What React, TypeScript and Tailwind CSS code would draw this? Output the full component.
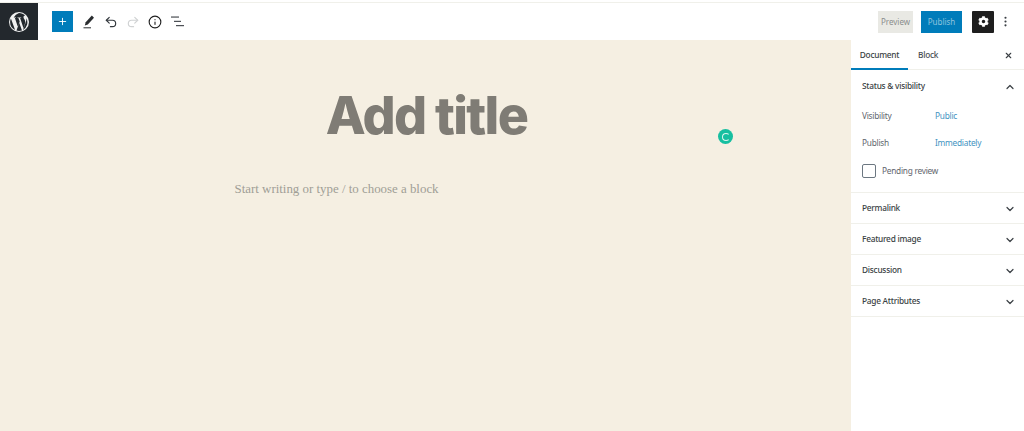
import { ChevronDown, ChevronUp, Info, MoreVertical, Plus, Redo2, Undo2, X } from "lucide-react"
import { FaCog } from "react-icons/fa"

const collapsed = ["Permalink", "Featured image", "Discussion", "Page Attributes"]

function WpLogo() {
  return (
    <svg viewBox="0 0 20 20" className="h-[20px] w-[20px]" fill="#f1f1f1" aria-hidden="true">
      <path d="M10 0a10 10 0 1 0 0 20 10 10 0 0 0 0-20Zm0 1.100c2.400 0 4.600 1 6.200 2.500h-.2c-.9 0-1.500.8-1.500 1.600 0 .7.400 1.400.9 2.100.4.600.8 1.500.8 2.700 0 .8-.3 1.800-.7 3.100l-1 3.200-3.400-10.200.9-.1c.3 0 .3-.5 0-.5 0 0-1 .1-1.700.1l-1.600-.1c-.4 0-.4.500-.1.500l.8.100 1.300 3.500-1.800 5.400-3-8.900.9-.1c.3 0 .3-.5 0-.5 0 0-1 .1-1.700.1h-.4A8.900 8.900 0 0 1 10 1.100ZM1.100 10c0-1.300.3-2.500.8-3.600l4.200 11.600A8.900 8.900 0 0 1 1.100 10Zm8.900 8.900c-.9 0-1.700-.1-2.500-.4l2.700-7.700 2.700 7.500.1.100c-.9.300-1.900.5-3 .5Zm4-.9 2.700-7.800c.5-1.300.7-2.300.7-3.200 0-.3 0-.6-.1-.9A8.900 8.900 0 0 1 14 18Z" />
    </svg>
  )
}

function ListView() {
  return (
    <svg viewBox="0 0 13 11" className="h-[11px] w-[13px]" fill="#3a3f44" aria-hidden="true">
      <rect x="0" y="0.500" width="8" height="1.100" />
      <rect x="3" y="4.800" width="7" height="1.100" />
      <rect x="5" y="9.100" width="8" height="1.100" />
    </svg>
  )
}

function Pencil() {
  return (
    <svg viewBox="0 0 12 14" className="h-[14px] w-3" fill="#2a2d30" aria-hidden="true">
      <path d="M8.800 0.500 11 2.700 4.800 9.400 1.800 10.500 2.700 7.300Z" />
      <rect x="0.500" y="12.300" width="7.500" height="1" />
    </svg>
  )
}

export default function App() {
  return (
    <div className="flex h-[431px] w-[1024px] flex-col overflow-hidden bg-white font-['Noto_Sans',sans-serif] text-[#3a3f44]">
      <div className="h-[3px] shrink-0 border-b border-[#f0f0ea] bg-white" />
      <header className="flex h-[37px] shrink-0 items-center bg-white">
        <div className="flex h-[37px] w-[38px] items-center justify-center bg-[#23282d]">
          <WpLogo />
        </div>
        <button className="ml-[14px] flex h-[21px] w-[21px] items-center justify-center bg-[#007cba] text-white">
          <Plus size={11} strokeWidth={2} />
        </button>
        <div className="ml-[10px] flex items-center">
          <span className="flex w-[12px] justify-center"><Pencil /></span>
          <Undo2 size={14} strokeWidth={2} className="ml-[9px] text-[#32373c]" />
          <Redo2 size={14} strokeWidth={2} className="ml-[8px] text-[#d0d2d3]" />
          <Info size={14} strokeWidth={1.900} className="ml-[8px] text-[#1e1e1e]" />
          <span className="ml-[9px] flex"><ListView /></span>
        </div>
        <div className="ml-auto flex items-center">
          <button className="flex h-[22px] w-[35px] items-center justify-center bg-[#e9e9e4] text-[8px] text-[#8a8d8c]">Preview</button>
          <button className="ml-[8px] flex h-[22px] w-[41px] items-center justify-center bg-[#007cba] text-[8px] text-[#8fc3dd]">Publish</button>
          <button className="ml-[10px] flex h-[22px] w-[22px] items-center justify-center rounded-[1px] bg-[#1e1e1e] text-white">
            <FaCog size={11} />
          </button>
          <MoreVertical size={13} strokeWidth={2} className="mr-[12px] ml-[5px] text-[#3a3f44]" />
        </div>
      </header>
      <div className="flex min-h-0 flex-1">
        <main className="relative flex-1 bg-[#f5efe2]">
          <div className="flex flex-col items-center pt-[40px]">
            <h1 className="ml-[2px] font-['Inter',sans-serif] text-[52px] leading-[72px] font-extrabold tracking-[-1.700px] text-[#7f7c75]">Add title</h1>
            <p className="mt-[27px] w-[382px] font-['Liberation_Serif',serif] text-[12.900px] leading-5 text-[#a09e96]">Start writing or type / to choose a block</p>
          </div>
          <div className="absolute top-[89px] left-[718px] flex h-[15px] w-[15px] items-center justify-center rounded-full bg-[#17bfa0]">
            <span className="h-[8px] w-[8px] rounded-full border-[1.500px] border-[#dff5ef] border-r-transparent" />
          </div>
        </main>
        <aside className="flex w-[173px] shrink-0 flex-col bg-white text-[8.300px] tracking-[-0.250px]">
          <div className="flex h-[30px] shrink-0 items-center border-b border-[#f0f0ea] pt-[2px]">
            <div className="relative flex h-full w-[57px] items-center justify-center font-medium">
              Document
              <span className="absolute right-0 bottom-[-1px] left-0 h-[2px] bg-[#007cba]" />
            </div>
            <span className="ml-[10px] font-medium text-[#4a4f54]">Block</span>
            <X size={9} strokeWidth={3} className="mr-[11px] ml-auto text-[#3a3f44]" />
          </div>
          <section className="flex h-[123px] shrink-0 flex-col border-b border-[#f0f0ea] px-[11px]">
            <div className="flex h-[32px] items-center justify-between pt-[1px] font-medium">
              <span>Status &amp; visibility</span>
              <ChevronUp size={12} strokeWidth={2.400} className="-mr-[3px]" />
            </div>
            <div className="mt-[7px] flex h-[14px] items-center">
              <span className="w-[73px] text-[#5f666d]">Visibility</span>
              <span className="text-[#3f93c1]">Public</span>
            </div>
            <div className="mt-[13px] flex h-[14px] items-center">
              <span className="w-[73px] text-[#5f666d]">Publish</span>
              <span className="text-[#3f93c1]">Immediately</span>
            </div>
            <div className="mt-[14px] flex items-center">
              <span className="h-[14px] w-[14px] rounded-[2px] border border-[#6c7781]" />
              <span className="ml-[6px] text-[#5f666d]">Pending review</span>
            </div>
          </section>
          {collapsed.map((name) => (
            <section key={name} className="flex h-[31px] shrink-0 items-center justify-between border-b border-[#f0f0ea] px-[11px] pt-[1px] font-medium">
              <span>{name}</span>
              <ChevronDown size={12} strokeWidth={2.400} className="-mr-[3px]" />
            </section>
          ))}
        </aside>
      </div>
    </div>
  )
}
